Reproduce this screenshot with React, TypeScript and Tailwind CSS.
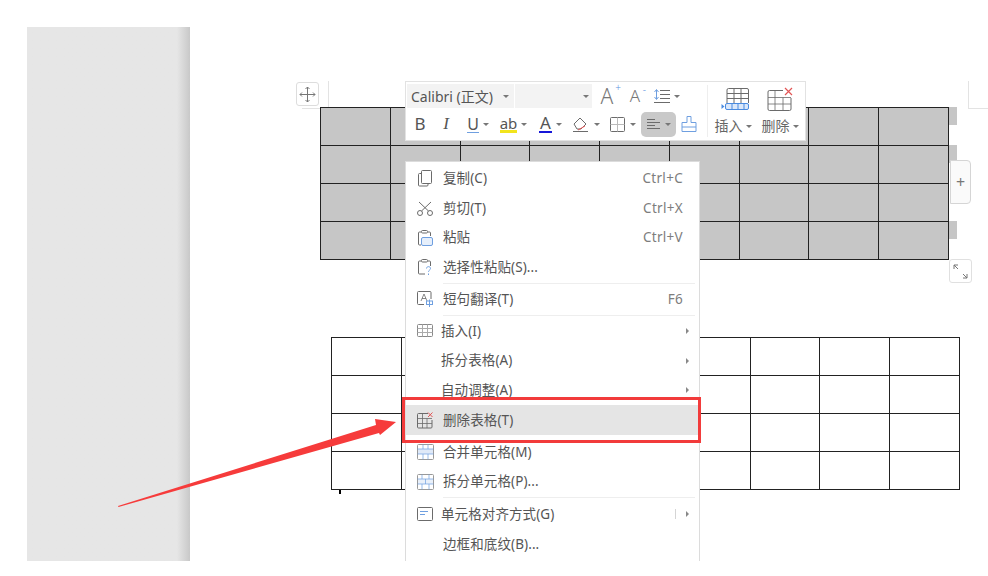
import React from "react";

const S = "#6b6b6b";
const B = "#6f9fe0";

function Ico({ w = 18, h = 18, children, className = "" }: { w?: number; h?: number; children: React.ReactNode; className?: string }) {
  return (
    <svg width={w} height={h} viewBox={`0 0 ${w} ${h}`} fill="none" stroke={S} strokeWidth="1" className={className}>
      {children}
    </svg>
  );
}

const IconCopy = () => (
  <Ico>
    <rect x="5.500" y="1.500" width="10" height="13" rx="1" />
    <path d="M5.500 4.500H3.500a1 1 0 0 0-1 1V16a1 1 0 0 0 1 1H11a1 1 0 0 0 1-1v-1.500" />
  </Ico>
);
const IconCut = () => (
  <Ico>
    <circle cx="4" cy="14" r="2.500" />
    <circle cx="14" cy="14" r="2.500" />
    <path d="M5.500 12 15 3M12.500 12 3 3" />
  </Ico>
);
const IconPaste = () => (
  <Ico>
    <path d="M5 3H3.500a1 1 0 0 0-1 1v11a1 1 0 0 0 1 1H5M12 3h1.500a1 1 0 0 1 1 1v3" />
    <rect x="5.500" y="1.500" width="6" height="2.500" rx="1" />
    <rect x="5.500" y="8.500" width="11" height="8" rx="1.500" stroke={B} fill="#e6effb" />
  </Ico>
);
const IconPasteSpecial = () => (
  <Ico>
    <path d="M5 3H3.500a1 1 0 0 0-1 1v11a1 1 0 0 0 1 1H9M12 3h1.500a1 1 0 0 1 1 1v4" />
    <rect x="5.500" y="1.500" width="6" height="2.500" rx="1" />
    <path d="M10.500 10.500c0-2.500 4-2.500 4 0 0 1.600-2 1.600-2 3.300M12.500 15.500v1.500" stroke={B} />
  </Ico>
);
const IconTranslate = () => (
  <Ico>
    <path d="M8 14.500H2.500a1 1 0 0 1-1-1V2.500a1 1 0 0 1 1-1H14a1 1 0 0 1 1 1V9" />
    <path d="M5 11 8 4l3 7M6 8.500h4" strokeWidth="0.800" />
    <rect x="10.500" y="11" width="6" height="3.500" stroke={B} />
    <path d="M13.500 9.500v7.500" stroke={B} />
  </Ico>
);
const IconTable = () => (
  <Ico>
    <rect x="1.500" y="2.500" width="15" height="12" rx="1" stroke="#888" />
    <path d="M1.500 6.500h15M1.500 10.500h15M6.500 2.500v12M11.500 2.500v12" stroke="#aaa" />
  </Ico>
);
const IconDeleteTable = () => (
  <Ico>
    <path d="M12 2.500H2.500a1 1 0 0 0-1 1V16a1 1 0 0 0 1 1H15a1 1 0 0 0 1-1V9" />
    <path d="M1.500 7.500H16M1.500 12.500H16M6.500 2.500V17M11 7.500V17" strokeWidth="0.800" />
    <path d="M12 1.500l4.500 4.500M16.500 1.500 12 6" stroke="#e25555" />
  </Ico>
);
const IconMerge = () => (
  <Ico>
    <rect x="1.500" y="1.500" width="16" height="15" rx="1" stroke="#999" />
    <rect x="2" y="6" width="15" height="5" fill="#dfe9f8" stroke="none" />
    <path d="M1.500 6h16M1.500 11h16M7 1.500V6M12 1.500V6M7 11v5.500M12 11v5.500" stroke={B} strokeWidth="0.700" />
  </Ico>
);
const IconSplit = () => (
  <Ico>
    <rect x="1.500" y="1.500" width="16" height="15" rx="1" stroke="#999" />
    <rect x="2" y="6" width="15" height="5" fill="#e9f0fa" stroke="none" />
    <path d="M1.500 6h16M1.500 11h16M9.500 6v5M6 1.500V6M13 1.500V6M6 11v5.500M13 11v5.500" stroke={B} strokeWidth="0.700" />
  </Ico>
);
const IconAlign = () => (
  <Ico>
    <rect x="1.500" y="2.500" width="15" height="13" rx="1" />
    <path d="M4 6.500h8M4 9.500h5" stroke={B} />
  </Ico>
);

type Row = {
  h: string;
  label?: string;
  icon?: React.ReactNode;
  key2?: string;
  arrow?: boolean;
  pipe?: boolean;
  indent?: string;
  active?: boolean;
  sep?: boolean;
};

const rows: Row[] = [
  { h: "h-[30px]", label: "复制(C)", icon: <IconCopy />, key2: "Ctrl+C" },
  { h: "h-[30px]", label: "剪切(T)", icon: <IconCut />, key2: "Ctrl+X" },
  { h: "h-[29px]", label: "粘贴", icon: <IconPaste />, key2: "Ctrl+V" },
  { h: "h-[30px]", label: "选择性粘贴(S)...", icon: <IconPasteSpecial /> },
  { h: "h-[2px]", sep: true },
  { h: "h-[30px]", label: "短句翻译(T)", icon: <IconTranslate />, key2: "F6" },
  { h: "h-[2px]", sep: true },
  { h: "h-[30px]", label: "插入(I)", icon: <IconTable />, arrow: true, indent: "ml-[7px]" },
  { h: "h-[29px]", label: "拆分表格(A)", arrow: true, indent: "ml-[7px]" },
  { h: "h-[30px]", label: "自动调整(A)", arrow: true, indent: "ml-[7px]" },
  { h: "h-[30px]", label: "删除表格(T)", icon: <IconDeleteTable />, active: true },
  { h: "h-[2px]" },
  { h: "h-[30px]", label: "合并单元格(M)", icon: <IconMerge /> },
  { h: "h-[29px]", label: "拆分单元格(P)...", icon: <IconSplit /> },
  { h: "h-[3px]", sep: true },
  { h: "h-[30px]", label: "单元格对齐方式(G)", icon: <IconAlign />, arrow: true, pipe: true, indent: "ml-[7px]" },
  { h: "h-[30px]", label: "边框和底纹(B)..." },
];

function Grid({ shaded }: { shaded?: boolean }) {
  return (
    <div className={`grid grid-cols-9 grid-rows-4 w-[629px] h-[153px] border-l border-t border-[#222] ${shaded ? "bg-[#c6c6c6]" : "bg-white"}`}>
      {Array.from({ length: 36 }).map((_, i) => (
        <div key={i} className="border-r border-b border-[#222]" />
      ))}
    </div>
  );
}

const Caret = ({ className = "" }: { className?: string }) => (
  <span className={`inline-block w-0 h-0 border-x-[3px] border-x-transparent border-t-[3px] border-t-[#777] ${className}`} />
);

function ToolBtn({ children, w, ml }: { children: React.ReactNode; w: string; ml: string }) {
  return <div className={`flex items-center justify-center gap-[4px] h-[24px] ${w} ${ml}`}>{children}</div>;
}

function Toolbar() {
  return (
    <div className="absolute left-[405px] top-[81px] w-[401px] h-[60px] bg-white border border-[#e2e2e2] flex">
      <div className="flex flex-col w-[300px]">
        <div className="flex items-center h-[28px] pl-[1px]">
          <div className="flex items-center justify-between w-[107px] h-[24px] bg-[#f3f3f3] pl-[4px] pr-[5px] text-[14px] text-[#555]">
            <span className="whitespace-nowrap">Calibri (正文)</span>
            <Caret />
          </div>
          <div className="flex items-center justify-end w-[77px] h-[24px] ml-[1px] bg-[#f3f3f3] pr-[3px]">
            <Caret />
          </div>
          <div className="relative w-[24px] ml-[3px] text-center text-[21px] font-light leading-[24px] text-[#777]">
            A<span className="absolute right-[-2px] top-[-3px] text-[10px] leading-[12px] text-[#5a93e0]">+</span>
          </div>
          <div className="relative w-[22px] ml-[5px] text-center text-[17px] font-light leading-[24px] text-[#777]">
            A<span className="absolute right-0 top-[-1px] text-[10px] leading-[12px] text-[#5a93e0]">-</span>
          </div>
          <div className="flex items-center gap-[3px] ml-[7px]">
            <svg width="18" height="18" viewBox="0 0 18 18" fill="none" stroke={S}>
              <path d="M7 3.500h10M7 7.500h10M7 11.500h10M1 15.500h16" />
              <path d="M3.500 3v9M1.500 5l2-2.500 2 2.500M1.500 10l2 2.500 2-2.500" stroke={B} />
            </svg>
            <Caret />
          </div>
        </div>
        <div className="flex items-center h-[28px] pl-[5px] text-[#555]">
          <ToolBtn w="w-[18px]" ml="ml-0"><span className="text-[17px]">B</span></ToolBtn>
          <ToolBtn w="w-[18px]" ml="ml-[8px]"><span className="text-[17px] italic [font-family:'Liberation_Serif',serif]">I</span></ToolBtn>
          <ToolBtn w="w-[30px]" ml="ml-[8px]">
            <span className="text-[16px] leading-[16px] border-b border-[#6f9fe0]">U</span>
            <Caret />
          </ToolBtn>
          <ToolBtn w="w-[33px]" ml="ml-[4px]">
            <span className="text-[15px] leading-[14px] border-b-[3px] border-[#f2e41c]">ab</span>
            <Caret />
          </ToolBtn>
          <ToolBtn w="w-[31px]" ml="ml-[5px]">
            <span className="text-[17px] leading-[16px] border-b-[2px] border-[#1717d8] px-[1px]">A</span>
            <Caret />
          </ToolBtn>
          <ToolBtn w="w-[32px]" ml="ml-[4px]">
            <svg width="18" height="18" viewBox="0 0 18 18" fill="none" stroke={S}>
              <path d="M2 9 8 3l6 6-5 5H5zM1 16.500h15" />
              <path d="M6 15l7-4" stroke="#e25555" />
            </svg>
            <Caret />
          </ToolBtn>
          <ToolBtn w="w-[30px]" ml="ml-[5px]">
            <svg width="17" height="17" viewBox="0 0 17 17" fill="none" stroke={S}>
              <rect x="1.500" y="1.500" width="14" height="14" rx="1" />
              <path d="M8.500 1.500v14M1.500 8.500h14" stroke="#bbb" />
            </svg>
            <Caret />
          </ToolBtn>
          <div className="flex items-center justify-center gap-[3px] w-[35px] h-[25px] rounded-[5px] bg-[#c9c9c9] ml-[4px]">
            <svg width="16" height="16" viewBox="0 0 16 16" fill="none" stroke={S}>
              <path d="M1 3.500h8M1 6.500h13M1 9.500h8M1 12.500h13" />
            </svg>
            <Caret />
          </div>
          <div className="ml-[4px] shrink-0">
            <svg width="18" height="20" viewBox="0 0 18 20" fill="none" stroke={B}>
              <path d="M7 2.500h4v6h5v9H2v-9h5zM2 13h14" />
            </svg>
          </div>
        </div>
      </div>
      <div className="w-px h-[52px] bg-[#eeeeee] mt-[3px] ml-[1px]" />
      <div className="flex flex-col items-center w-[50px] text-[14px] text-[#666]">
        <svg width="30" height="28" viewBox="0 0 30 28" fill="none" stroke={S} className="mt-[4px] ml-[5px] shrink-0">
          <path d="M6 17V4a1.500 1.500 0 0 1 1.500-1.500H26a1.500 1.500 0 0 1 1.500 1.500v13M6 7.500h21.500M6 12.500h21.500M13 2.500V17M20 2.500V17" />
          <rect x="4.500" y="17.500" width="23" height="6" rx="1.500" stroke="#4a8be0" fill="#dbe8fa" />
          <path d="M11 17.500v6M17 17.500v6M23 17.500v6" stroke="#4a8be0" />
          <path d="M0.500 18l3 2.500-3 2.500z" fill="#4a8be0" stroke="none" />
        </svg>
        <div className="flex items-center gap-[3px] leading-[24px] whitespace-nowrap">插入<Caret /></div>
      </div>
      <div className="flex flex-col items-center w-[44px] text-[14px] text-[#666]">
        <svg width="30" height="28" viewBox="0 0 30 28" fill="none" stroke={S} className="mt-[4px] shrink-0">
          <path d="M18 4.500H4.500A1.500 1.500 0 0 0 3 6v17a1.500 1.500 0 0 0 1.500 1.500h20A1.500 1.500 0 0 0 26 23V12" />
          <path d="M3 11.500h23M3 18h23M10 4.500v20M18 11.500v13" strokeWidth="0.800" />
          <path d="M20 2l7 7M27 2l-7 7" stroke="#e25555" strokeWidth="1.200" />
        </svg>
        <div className="flex items-center gap-[3px] leading-[24px] whitespace-nowrap">删除<Caret /></div>
      </div>
    </div>
  );
}

function ContextMenu() {
  return (
    <div className="absolute left-[405px] top-[161px] w-[295px] h-[400px] bg-white border-l border-r border-t border-[#dcdcdc] pt-[1px] overflow-hidden text-[13.5px] text-[#555]">
      {rows.map((r, i) =>
        r.label === undefined ? (
          <div key={i} className={`${r.h} pl-[37px] pr-[4px] flex items-center`}>
            {r.sep && <div className="h-px w-full bg-[#eeeeee]" />}
          </div>
        ) : (
          <div key={i} className={`${r.h} flex items-center pl-[9px] pr-[16px] ${r.active ? "bg-[#e5e5e5] mr-[1px]" : ""}`}>
            <div className="w-[19px] h-[18px] flex items-center justify-center shrink-0">{r.icon}</div>
            <span className={`${r.indent ?? "ml-[9px]"} tracking-[0.1px] whitespace-nowrap`}>{r.label}</span>
            <span className="ml-auto text-[#7d7d7d] text-[13.5px] tracking-[0.3px]">{r.key2}</span>
            {r.pipe && <span className="w-px h-[10px] bg-[#d5d5d5] mr-[10px]" />}
            {r.arrow && <span className="w-0 h-0 border-y-[3px] border-y-transparent border-l-[3px] border-l-[#888] mr-[-6px]" />}
          </div>
        )
      )}
    </div>
  );
}

export default function App() {
  return (
    <div className="relative w-[988px] h-[576px] bg-white overflow-hidden [font-family:'Noto_Sans','Noto_Sans_CJK_SC',sans-serif]">
      <div className="flex pt-[27px] pl-[27px] h-[561px]">
        <aside className="w-[163px] h-[534px] bg-gradient-to-r from-[#e6e6e6] from-[92%] to-[#c8c8c8]" />
        <main className="flex flex-col">
          <div className="ml-[130px] mt-[80px]"><Grid shaded /></div>
          <div className="ml-[141px] mt-[77px]"><Grid /></div>
        </main>
      </div>

      {/* table handles */}
      <div className="absolute left-[296px] top-[82px] w-[23px] h-[24px] border border-[#dddddd] rounded-[3px] bg-white flex items-center justify-center">
        <svg width="17" height="17" viewBox="0 0 17 17" fill="none" stroke="#777">
          <path d="M8.500 1v15M1 8.500h15M6.500 3l2-2 2 2M6.500 14l2 2 2-2M3 6.500l-2 2 2 2M14 6.500l2 2-2 2" />
        </svg>
      </div>
      <div className="absolute left-[328px] top-[81px] w-px h-[26px] bg-[#e3e3e3]" />
      <div className="absolute left-[302px] top-[108px] w-[18px] h-px bg-[#e3e3e3]" />
      <div className="absolute left-[968px] top-[81px] w-[20px] h-[28px] border-l border-b border-[#e3e3e3]" />
      <div className="absolute left-[949px] top-[107px] w-[8px] h-[18px] bg-[#c6c6c6]" />
      <div className="absolute left-[949px] top-[145px] w-[8px] h-[18px] bg-[#c6c6c6]" />
      <div className="absolute left-[949px] top-[221px] w-[8px] h-[18px] bg-[#c6c6c6]" />
      <div className="absolute left-[950px] top-[160px] w-[21px] h-[44px] border border-[#d5d5d5] rounded-r-[4px] bg-[#fafafa] flex items-center justify-center text-[16px] text-[#777]">+</div>
      <div className="absolute left-[949px] top-[259px] w-[23px] h-[24px] border border-[#e0e0e0] rounded-[3px] bg-white flex items-center justify-center">
        <svg width="17" height="17" viewBox="0 0 17 17" fill="none" stroke="#777">
          <path d="M2 2l4 4M2 6V2h4M15 15l-4-4M15 11v4h-4" />
        </svg>
      </div>
      <div className="absolute left-[339px] top-[490px] w-[2px] h-[4px] bg-black" />

      <Toolbar />
      <ContextMenu />

      {/* annotation */}
      <div className="absolute left-[402px] top-[397px] w-[299px] h-[46px] border-[3px] border-[#f23b3b]" />
      <svg className="absolute left-0 top-0 pointer-events-none" width="988" height="576" viewBox="0 0 988 576">
        <polygon points="118,506 118.500,507 379,433 380,435 396,422 375,419 376,425" fill="#f63b3b" />
      </svg>
    </div>
  );
}
